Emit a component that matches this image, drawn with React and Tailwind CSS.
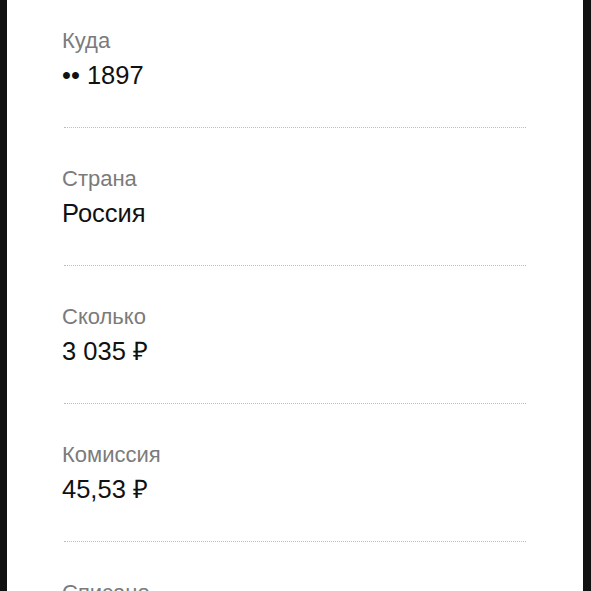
const rows = [
  { label: "Куда", value: "•• 1897" },
  { label: "Страна", value: "Россия" },
  { label: "Сколько", value: "3 035 ₽" },
  { label: "Комиссия", value: "45,53 ₽" },
  { label: "Списано", value: "3 080,53 ₽" },
];

export default function App() {
  return (
    <div className="h-[591px] overflow-hidden bg-[#111] pl-[7px] pr-[8px] font-['Liberation_Sans',Arial,sans-serif]">
      <div className="h-full bg-white px-[57px]">
        {rows.map((row) => (
          <div
            key={row.label}
            className="border-b border-dotted border-[#bdbdbd] pt-[37px] pb-[36px] first:pt-[27px]"
          >
            <div className="text-[22px] leading-[28px] text-[#7b7b7b] -ml-[2px]">{row.label}</div>
            <div className="mt-[4px] text-[25.5px] leading-[32px] text-[#111] -ml-[2px]">{row.value}</div>
          </div>
        ))}
      </div>
    </div>
  );
}
